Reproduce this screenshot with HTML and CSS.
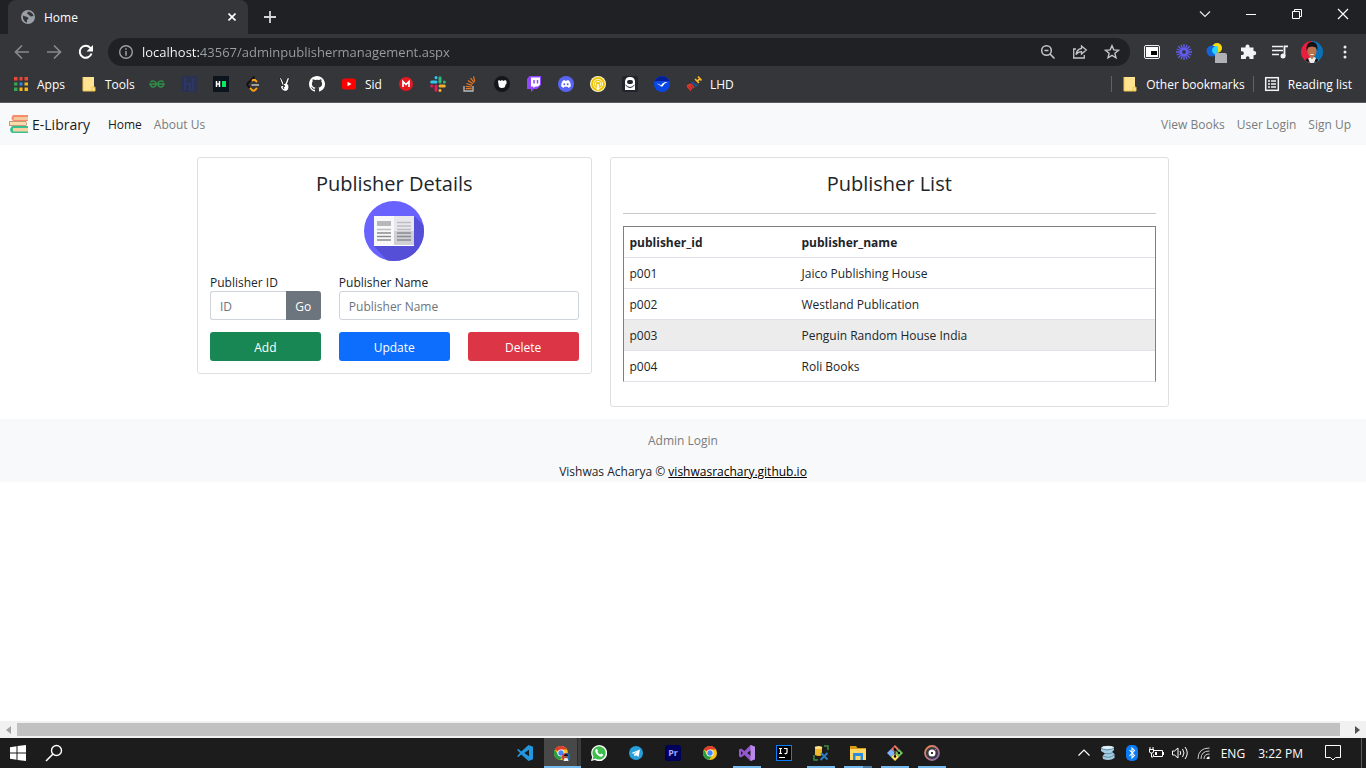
FILE: index.html
```html
<!DOCTYPE html>
<html lang="en">
<head>
<meta charset="utf-8">
<meta name="viewport" content="width=device-width, initial-scale=1">
<title>Home</title>
<link rel="stylesheet" href="styles.css">
</head>
<body>
<header class="browser">
  <div class="tab-strip">
    <div class="tab">
      <svg class="tab-icon" width="14" height="14" viewBox="0 0 14 14"><circle cx="7" cy="7" r="7" fill="#9aa0a6"/><path d="M2 5.500l2.500 1 2 .5 1 1.500-1.500 1.500v2.500C3.500 12 1.500 9.500 2 5.500zM7 1.500L6 3.500 8 5l1.500 1.500 3-.5C12 3.500 10 1.800 7 1.500z" fill="#35363a"/></svg>
      <span class="tab-title">Home</span>
      <button class="icon-btn tab-close" aria-label="Close tab"><svg width="8" height="8" viewBox="0 0 8 8"><path d="M.5.5l7 7M7.500.5l-7 7" stroke="#fff" stroke-width="1.600"/></svg></button>
    </div>
    <button class="icon-btn new-tab" aria-label="New tab"><svg width="12" height="12" viewBox="0 0 12 12"><path d="M6 0v12M0 6h12" stroke="#d5d6d8" stroke-width="1.800"/></svg></button>
    <div class="window-controls">
      <button class="icon-btn" aria-label="Search tabs"><svg width="12" height="12" viewBox="0 0 12 12"><path d="M1 3.500l5 5 5-5" fill="none" stroke="#e8e8e8" stroke-width="1.200"/></svg></button>
      <button class="icon-btn" aria-label="Minimize"><svg width="12" height="12" viewBox="0 0 12 12"><path d="M1 6.500h10" stroke="#fff"/></svg></button>
      <button class="icon-btn" aria-label="Restore"><svg width="12" height="12" viewBox="0 0 12 12"><path d="M1.500 3.500h7v7h-7zM3.500 3.500v-2h7v7h-2" fill="none" stroke="#fff"/></svg></button>
      <button class="icon-btn" aria-label="Close"><svg width="12" height="12" viewBox="0 0 12 12"><path d="M1 1l10 10M11 1L1 11" stroke="#fff" stroke-width="1.200"/></svg></button>
    </div>
  </div>
  <div class="toolbar">
    <button class="icon-btn" aria-label="Back"><svg width="16" height="16" viewBox="0 0 16 16"><path d="M15 8H2M8 1.500L1.500 8 8 14.500" fill="none" stroke="#87898c" stroke-width="1.700"/></svg></button>
    <button class="icon-btn" aria-label="Forward"><svg width="16" height="16" viewBox="0 0 16 16"><path d="M1 8h13M8 1.500L14.500 8 8 14.500" fill="none" stroke="#87898c" stroke-width="1.700"/></svg></button>
    <button class="icon-btn" aria-label="Reload"><svg width="16" height="16" viewBox="0 0 16 16"><path d="M13.500 9.500A6 6 0 1 1 12.300 3.800L13.500 5" fill="none" stroke="#fff" stroke-width="2"/><path d="M15 1v6.500H8.500z" fill="#fff"/></svg></button>
    <div class="omnibox">
      <svg width="14" height="14" viewBox="0 0 14 14"><circle cx="7" cy="7" r="6.300" fill="none" stroke="#9aa0a6" stroke-width="1.400"/><path d="M7 3.300v1.500M7 6v4.700" stroke="#9aa0a6" stroke-width="1.500"/></svg>
      <input class="url" type="text" aria-label="Address" value="localhost:43567/adminpublishermanagement.aspx">
      <button class="icon-btn" aria-label="Zoom"><svg width="16" height="16" viewBox="0 0 16 16"><circle cx="6.500" cy="6.500" r="4.800" fill="none" stroke="#c3c5c8" stroke-width="1.500"/><path d="M10 10l4.500 4.500M4.500 6.500h4" stroke="#c3c5c8" stroke-width="1.600"/></svg></button>
      <button class="icon-btn" aria-label="Share"><svg width="16" height="16" viewBox="0 0 16 16"><path d="M4 5H1.700v9h10.600v-3M9.500 2l4.800 4-4.800 4V7.700C7 7.700 5.500 8.500 4 10.500c.5-3.500 2.500-5.500 5.500-6z" fill="none" stroke="#c3c5c8" stroke-width="1.300"/></svg></button>
      <button class="icon-btn" aria-label="Bookmark this page"><svg width="16" height="16" viewBox="0 0 16 16"><path d="M8 1.700l1.800 4.200 4.700.4-3.600 3 1.100 4.500L8 11.400l-4 2.400 1.100-4.500-3.600-3 4.700-.4z" fill="none" stroke="#c3c5c8" stroke-width="1.400"/></svg></button>
    </div>
    <div class="extensions">
      <button class="icon-btn" aria-label="Picture in picture"><svg width="18" height="18" viewBox="0 0 18 18"><rect x="1.500" y="2.500" width="15" height="13" rx="1.500" fill="#35363a" stroke="#eee"/><rect x="3" y="4" width="12" height="10" fill="#fff"/><rect x="8" y="8" width="6" height="4" fill="#000"/></svg></button>
      <button class="icon-btn" aria-label="Loom"><svg width="18" height="18" viewBox="0 0 18 18"><path d="M9 1v16M1 9h16M3.300 3.300l11.400 11.400M14.700 3.300L3.300 14.700M6 1.700l6 14.600M12 1.700L6 16.300M1.700 6l14.600 6M1.700 12l14.600-6" stroke="#625df5" stroke-width="1.300"/><circle cx="9" cy="9" r="3.800" fill="#625df5"/><circle cx="9" cy="9" r="1.900" fill="#35363a"/></svg></button>
      <button class="icon-btn" aria-label="Extension"><svg width="22" height="22" viewBox="0 0 22 22"><circle cx="12" cy="7" r="5" fill="#fbdb0e"/><circle cx="7" cy="10" r="5.500" fill="#1565d8"/><path d="M7 9.500A5 5 0 0 1 12 5c1.500 2 1.500 5-1 8.500-2 0-4-2-4-4z" fill="#23d5ff"/><rect x="10" y="12" width="12" height="12" rx="2" fill="#aeb1b5"/></svg></button>
      <button class="icon-btn" aria-label="Extensions"><svg width="18" height="18" viewBox="0 0 18 18"><path d="M2 4.500h4.500V3.600a2 2 0 0 1 4 0v.9h4V8h.6a2 2 0 0 1 0 4.300h-.6V16H10.500v-1a1.800 1.800 0 0 0-3.600 0v1H2v-4h1a1.800 1.800 0 0 0 0-3.700H2z" fill="#f1f3f4"/></svg></button>
      <button class="icon-btn" aria-label="Media"><svg width="18" height="18" viewBox="0 0 18 18"><path d="M1 3.500h11M1 7.500h11M1 11.500h7" stroke="#f1f3f4" stroke-width="1.600"/><path d="M13.500 13V3.300H17" fill="none" stroke="#f1f3f4" stroke-width="1.800"/><circle cx="12" cy="13" r="2.500" fill="#f1f3f4"/></svg></button>
      <button class="icon-btn" aria-label="Profile"><svg width="22" height="22" viewBox="0 0 22 22"><defs><clipPath id="face"><circle cx="11" cy="11" r="11"/></clipPath></defs><g clip-path="url(#face)"><path d="M0 0h11v22H0z" fill="#e8203f"/><path d="M11 0h11v22H11z" fill="#0a70b8"/><path d="M4 22l2-4 4-2h3l4 2 1 4z" fill="#f0eee8"/><path d="M4 22l1-4 2-1 2 5zM18 22l-1-4-2-1-2 5z" fill="#1b1b20"/><ellipse cx="11" cy="10" rx="4.500" ry="6.500" fill="#b9744d"/><path d="M5.800 10C4.500 3 8 1 11 1s6.500 2 5.200 9L15 6.500l-4-1-4 1z" fill="#171113"/><path d="M9.500 13.500h3" stroke="#fff"/><path d="M8.800 15.500l2.200 3 2.200-3" fill="#b9744d"/></g></svg></button>
      <button class="icon-btn" aria-label="Menu"><svg width="16" height="16" viewBox="0 0 16 16"><g fill="#eee"><circle cx="8" cy="3" r="1.500"/><circle cx="8" cy="8" r="1.500"/><circle cx="8" cy="13" r="1.500"/></g></svg></button>
    </div>
  </div>
  <nav class="bookmarks" aria-label="Bookmarks">
    <a href="#" class="bookmark wide"><svg viewBox="0 0 16 16"><path d="M1 1h4v4H1zM6 1h4v4H6zM11 1h4v4h-4z" fill="#ee4539"/><path d="M1 6h4v4H1zM1 11h4v4H1z" fill="#33a852"/><path d="M6 6h4v4H6z" fill="#2a85f5"/><path d="M11 6h4v4h-4zM6 11h4v4H6zM11 11h4v4h-4z" fill="#f7b716"/><path d="M5.500 0v16M10.500 0v16M0 5.500h16M0 10.500h16" stroke="#35363a" stroke-width="2"/></svg><span>Apps</span></a>
    <a href="#" class="bookmark wide"><svg viewBox="0 0 16 16"><path d="M2 1h11v10l1 1v3H2z" fill="#ffe390"/><path d="M2 1v14h9M11 11h3v4h-3z" fill="none" stroke="#efc650"/></svg><span>Tools</span></a>
    <a href="#" class="bookmark" aria-label="GeeksforGeeks"><svg viewBox="0 0 16 16"><path d="M1.500 6C3 4.500 7 4.500 7 8s-4.500 4-5.500 1L1 8h14l-.5 1c-1 3-5.500 2.500-5.500-1s4-3.500 5.500-2" fill="none" stroke="#2f8d46" stroke-width="1.500"/></svg></a>
    <a href="#" class="bookmark" aria-label="Hashnode"><svg viewBox="0 0 16 16"><path d="M0 0h16v16H0z" fill="#2b3150"/><path d="M4 2v12M4 8h5v6M12 2v12H8" stroke="#2d3763" fill="none" stroke-width="2"/></svg></a>
    <a href="#" class="bookmark" aria-label="HackerRank"><svg viewBox="0 0 16 16"><path d="M0 0h16v16H0z" fill="#0e141e"/><path d="M3.500 5v6M6.500 5v6M3 8h4" stroke="#fff" stroke-width="1.500"/><path d="M9 5h4v6H9z" fill="#00ea64"/></svg></a>
    <a href="#" class="bookmark" aria-label="LeetCode"><svg viewBox="0 0 16 16"><path d="M9.500.5L3 7c-1 1-1 2 0 3l2 2" fill="none" stroke="#111" stroke-width="1.800"/><path d="M5 12l2 2c1 1 2 1 3 0l2-2M7 5l1-1h2l2 2" fill="none" stroke="#ffa116" stroke-width="1.800"/><path d="M6.500 9H14" stroke="#b3b3b3" stroke-width="1.700"/></svg></a>
    <a href="#" class="bookmark" aria-label="AngelList"><svg viewBox="0 0 16 16"><path d="M4 1.500l3 6 1 0 2.500-6 2 .5-2 6c2 1 2 5-.5 7-3 1-5.500-1-6.500-4l1.500-2.500L2.500 2z" fill="#fff" stroke="#111" stroke-width=".8"/><path d="M4 9l4 1-2 1 1 2M7 7l-1 2" fill="none" stroke="#222"/></svg></a>
    <a href="#" class="bookmark" aria-label="GitHub"><svg viewBox="0 0 16 16"><path d="M8 0C3.600 0 0 3.600 0 8c0 3.500 2.300 6.500 5.500 7.600.4.100.5-.2.500-.4v-1.500c-2.200.5-2.700-.9-2.700-.9-.4-.9-.9-1.200-.9-1.200-.7-.5.100-.5.100-.5.800.1 1.200.8 1.200.8.700 1.300 1.900.9 2.300.7.100-.5.300-.9.500-1.100-1.800-.2-3.600-.9-3.600-4 0-.9.300-1.600.8-2.100-.1-.2-.4-1 .1-2.100 0 0 .7-.2 2.200.8a7.600 7.600 0 0 1 4 0c1.500-1 2.200-.8 2.200-.8.500 1.100.2 1.900.1 2.100.5.500.8 1.200.8 2.100 0 3.100-1.900 3.800-3.700 4 .3.300.6.800.6 1.500v2.200c0 .2.100.5.500.4A8 8 0 0 0 8 0z" fill="#fff"/></svg></a>
    <a href="#" class="bookmark sid"><svg viewBox="0 0 16 16"><rect x="1" y="2.500" width="14" height="11" rx="2.500" fill="red"/><path d="M6.500 5.700L10.500 8l-4 2.300z" fill="#fff"/></svg><span>Sid</span></a>
    <a href="#" class="bookmark" aria-label="Mega"><svg viewBox="0 0 16 16"><circle cx="8" cy="8" r="7" fill="#e6191f"/><path d="M5 11V5.500l3 3 3-3V11" fill="none" stroke="#fff" stroke-width="1.700"/></svg></a>
    <a href="#" class="bookmark" aria-label="Slack"><svg viewBox="0 0 16 16"><g stroke-width="3" stroke-linecap="round"><path d="M6 1.600v.1M1.700 6H6" stroke="#36c5f0"/><path d="M10 1.700V6M14.300 6h.1" stroke="#2eb67d"/><path d="M10 14.300v.1M10 10h4.300" stroke="#ecb22e"/><path d="M6 10v4.300M1.700 10h.1" stroke="#e01e5a"/></g></svg></a>
    <a href="#" class="bookmark" aria-label="Stack Overflow"><svg viewBox="0 0 16 16"><path d="M2 10v5h9v-5" fill="none" stroke="#bcbbbb" stroke-width="1.300"/><path d="M3.700 12.700h6M3.800 10.300l6 .7M4.500 7.500l5.700 1.900M6 4.600l5 3.200M8.500 2l3.700 4.700M11.500.5l1.300 5" stroke="#e87922" stroke-width="1.200"/></svg></a>
    <a href="#" class="bookmark" aria-label="Peerlist"><svg viewBox="0 0 16 16"><circle cx="8" cy="8" r="8" fill="#141619"/><path d="M4 5l1-1 1.500 1 1.500-1 1.500 1L11 4l1.500 1v3l-1 .5c0 2.500-1 3.500-3.500 3.500s-3.300-1-3.500-3.500z" fill="#fff"/></svg></a>
    <a href="#" class="bookmark" aria-label="Twitch"><svg viewBox="0 0 16 16"><path d="M3.500 0H15v9l-4 4H8l-3 3v-3H1V3z" fill="#9146ff"/><path d="M5 1.500h9v7l-2 2H9.500L7.500 12v-1.500H5z" fill="#fff"/><path d="M8 4v3.500M11.500 4v3.500" stroke="#9146ff" stroke-width="1.500"/></svg></a>
    <a href="#" class="bookmark" aria-label="Discord"><svg viewBox="0 0 16 16"><circle cx="8" cy="8" r="8" fill="#5865f2"/><path d="M5 4.500l1.500-.5.500.8h2l.5-.8 1.500.5c1.500 2 2 4 1.700 6L10.500 12l-.8-1.200H6.300L5.500 12l-2.200-1.500C3 8.500 3.500 6.500 5 4.500z" fill="#fff"/><circle cx="6.300" cy="8.300" r="1" fill="#5865f2"/><circle cx="9.700" cy="8.300" r="1" fill="#5865f2"/></svg></a>
    <a href="#" class="bookmark" aria-label="Coin"><svg viewBox="0 0 16 16"><circle cx="8" cy="8" r="8" fill="#fff8d0"/><circle cx="8" cy="8" r="6" fill="none" stroke="#f0c400" stroke-width="2"/><circle cx="8" cy="8" r="4" fill="#f0c400"/><path d="M7.300 14V8M8.700 14V8M5.500 9.500a2.800 2.800 0 1 1 5 0" fill="none" stroke="#fff" stroke-width="1"/></svg></a>
    <a href="#" class="bookmark" aria-label="Hacker"><svg viewBox="0 0 16 16"><rect width="16" height="16" rx="2" fill="#20252d"/><path d="M3 14V6q0-5 5-5t5 5v8z" fill="#fff"/><rect x="5" y="4" width="6" height="4" rx="2" fill="#20252d"/><path d="M3.500 9q4.500 5 9 0" fill="none" stroke="#20252d"/></svg></a>
    <a href="#" class="bookmark" aria-label="Bird"><svg viewBox="0 0 16 16"><circle cx="8" cy="8" r="8" fill="#0a46e5"/><path d="M.7 5a8 8 0 0 1 14.600 0z" fill="#061e95"/><path d="M2.500 7.500q2.500 0 4.500 2 2-4 6.500-3.500-3.500 1-5 4.500H7Q5 8.500 2.500 7.500z" fill="#fff"/></svg></a>
    <a href="#" class="bookmark lhd"><svg viewBox="0 0 16 16"><g fill="none" stroke-width="1.600"><path d="M1 10l4 4.500M3 9l3 4M5 8l3 4M1 10l4-2" stroke="#e73427"/><path d="M6 6l4 4 2-2" stroke="#1d539f"/><path d="M9 3l4 4M12 .5l3.500 4M11 5l3-2" stroke="#f8b92a"/></g></svg><span>LHD</span></a>
    <span class="bookmark-end">
      <a href="#" class="bookmark other"><svg viewBox="0 0 16 16"><path d="M2 1h11v10l1 1v3H2z" fill="#ffe390"/><path d="M2 1v14h9M11 11h3v4h-3z" fill="none" stroke="#efc650"/></svg><span>Other bookmarks</span></a>
      <a href="#" class="bookmark reading"><svg viewBox="0 0 16 16"><rect x="1.700" y="1.700" width="12.600" height="12.600" fill="none" stroke="#f1f3f4" stroke-width="1.500"/><path d="M4 5h2M4 8h2M4 11h2M7 5h5M7 8h5M7 11h5" stroke="#f1f3f4" stroke-width="1.500"/></svg><span>Reading list</span></a>
    </span>
  </nav>
</header>

<div class="page">
  <nav class="navbar">
    <a href="#" class="brand"><svg width="20" height="20" viewBox="0 0 20 20"><path d="M4 1h15v6H4Q1 4 4 1z" fill="#f98a6d"/><path d="M5 3h14v3H4.500z" fill="#f4c99a"/><path d="M0 7h17q2 3 0 5H0z" fill="#c99b74"/><path d="M1 8h16v3H1z" fill="#f7dcae"/><path d="M3 12h16v7H3q-4-3 0-7z" fill="#39bf90"/><path d="M4 14h15v3.500H4z" fill="#f4d3a0"/></svg><span>E-Library</span></a>
    <a href="#" class="nav-link active">Home</a>
    <a href="#" class="nav-link">About Us</a>
    <div class="nav-end">
      <a href="#" class="nav-link">View Books</a>
      <a href="#" class="nav-link">User Login</a>
      <a href="#" class="nav-link">Sign Up</a>
    </div>
  </nav>

  <main class="content">
    <section class="card details">
      <h1 class="card-title">Publisher Details</h1>
      <svg class="publisher-icon" width="60" height="60" viewBox="0 0 60 60"><defs><clipPath id="disc"><circle cx="30" cy="30" r="30"/></clipPath></defs><g clip-path="url(#disc)"><path d="M0 0h60v60H0z" fill="#6962ff"/><path d="M50 15l15 14v36H28L10 45z" fill="#544fd6"/></g><path d="M10 15h20v30H10z" fill="#f8f8f8"/><path d="M30 15h20v15H30z" fill="#e7e7ec"/><path d="M30 30h20v15H30z" fill="#cfd0d6"/><path d="M10 44.500h40" stroke="#fff"/><path d="M13 20h14v5H13z" fill="#b8b8bc"/><path d="M13 28.500h14M33 21.500h14M33 25h14M33 28.500h14" stroke="#bcbcc1" stroke-width="1.300"/><path d="M13 32h14M13 35.500h14M13 39h14M33 32h14M33 35.500h14M33 39h14" stroke="#8c8c91" stroke-width="1.500"/></svg>
      <form class="form">
        <div class="field">
          <label for="pid">Publisher ID</label>
          <div class="input-group"><input id="pid" class="input" type="text" placeholder="ID"><button type="button" class="btn btn-go">Go</button></div>
        </div>
        <div class="field field-name">
          <label for="pname">Publisher Name</label>
          <input id="pname" class="input" type="text" placeholder="Publisher Name">
        </div>
        <button type="button" class="btn btn-add">Add</button>
        <button type="button" class="btn btn-update">Update</button>
        <button type="button" class="btn btn-delete">Delete</button>
      </form>
    </section>
    <section class="card list">
      <h2 class="card-title">Publisher List</h2>
      <hr class="rule">
      <table class="table">
        <thead><tr><th class="col-id">publisher_id</th><th>publisher_name</th></tr></thead>
        <tbody>
          <tr><td>p001</td><td>Jaico Publishing House</td></tr>
          <tr><td>p002</td><td>Westland Publication</td></tr>
          <tr class="hovered"><td>p003</td><td>Penguin Random House India</td></tr>
          <tr><td>p004</td><td>Roli Books</td></tr>
        </tbody>
      </table>
    </section>
  </main>

  <footer class="footer">
    <a href="#" class="admin-link">Admin Login</a>
    <p class="credit">Vishwas Acharya © <a href="#">vishwasrachary.github.io</a></p>
  </footer>
</div>

<div class="scrollbar">
  <button class="icon-btn scroll-btn" aria-label="Scroll left"><svg width="5" height="8" viewBox="0 0 5 8"><path d="M5 0v8L0 4z" fill="#a3a3a3"/></svg></button>
  <div class="thumb"></div>
  <button class="icon-btn scroll-btn end" aria-label="Scroll right"><svg width="5" height="8" viewBox="0 0 5 8"><path d="M0 0v8l5-4z" fill="#505050"/></svg></button>
</div>

<div class="taskbar">
  <div class="task-start">
    <button class="icon-btn" aria-label="Start"><svg width="16" height="16" viewBox="0 0 16 16"><path d="M0 2.300l6.500-1v6.200H0zM7.500 1.100L16 0v7.500H7.500zM0 8.500h6.500v6.200L0 13.700zM7.500 8.500H16V16l-8.500-1.100z" fill="#fff"/></svg></button>
    <button class="icon-btn" aria-label="Search"><svg width="18" height="18" viewBox="0 0 18 18"><circle cx="11.500" cy="6.500" r="5" fill="none" stroke="#fff" stroke-width="1.400"/><path d="M8 10l-7 7" stroke="#fff" stroke-width="1.600"/></svg></button>
  </div>
  <div class="task-apps">
    <button class="task" aria-label="Visual Studio Code"><svg viewBox="0 0 16 16"><path d="M11.500 0L16 1.800v12.400L11.500 16 4.300 9.500 1.500 12 0 11.200 3 8 0 4.800 1.500 4l2.800 2.500zM12 4.700L7.300 8l4.700 3.300z" fill="#2396e0" fill-rule="evenodd"/></svg></button>
    <button class="task active" aria-label="Chrome, work profile"><svg viewBox="0 0 16 16"><circle cx="7" cy="8" r="7" fill="#fbc116"/><path d="M7 8L.9 4.500A7 7 0 0 1 13 4.500H7z" fill="#e33b2e"/><path d="M.9 4.500A7 7 0 0 0 6 15l3.500-5L4 10z" fill="#299c48"/><circle cx="7" cy="8" r="3.500" fill="#fff"/><circle cx="7" cy="8" r="2.700" fill="#4285f4"/><circle cx="12" cy="12" r="4" fill="#e0333c"/><path d="M12 8a4 4 0 0 1 0 8z" fill="#1669b0"/><path d="M9.500 16l1-3h3l1 3z" fill="#eee"/><circle cx="12" cy="11.500" r="1.800" fill="#9d603c"/><path d="M10 11q0-2 2-2t2 2z" fill="#111"/></svg></button>
    <button class="task" aria-label="WhatsApp"><svg viewBox="0 0 16 16"><path d="M0 16l1.200-4A8 8 0 1 1 4 14.900z" fill="#fff"/><path d="M1.600 14.400l.8-3A6.600 6.600 0 1 1 4.600 13.600z" fill="#3ebe4d"/><path d="M5 4l1-.3 1 2-.6 1q1 2 2.800 2.700l1-1 2 1q0 2-2.200 2.300C7.500 11.500 4 8 4.200 5.500z" fill="#fff"/></svg></button>
    <button class="task" aria-label="Telegram"><svg viewBox="0 0 16 16"><circle cx="8" cy="8" r="7" fill="#279fda"/><path d="M3.500 8L12 4.500l-1.500 7.500L8 10.300l-1.500 1.200-.5-2.200L10 6 5.500 8.800z" fill="#fff"/></svg></button>
    <button class="task" aria-label="Premiere Pro"><svg viewBox="0 0 16 16"><rect width="16" height="16" rx="2.500" fill="#00005b"/><text x="8" y="11" text-anchor="middle" class="logo-text" fill="#aaa5ff">Pr</text></svg></button>
    <button class="task" aria-label="Chrome"><svg viewBox="0 0 16 16"><circle cx="8" cy="8" r="7" fill="#fbc116"/><path d="M8 8L1.900 4.500A7 7 0 0 1 14 4.500H8z" fill="#e33b2e"/><path d="M1.900 4.500A7 7 0 0 0 7 15l3.500-5L5 10z" fill="#299c48"/><circle cx="8" cy="8" r="3.500" fill="#fff"/><circle cx="8" cy="8" r="2.700" fill="#4285f4"/></svg></button>
    <button class="task open" aria-label="Visual Studio"><svg viewBox="0 0 16 16"><path d="M11.500 0L16 1.800v12.400L11.500 16 5.500 10 2 12.500l-2-1v-7l2-1L5.500 6zM12 5L8.200 8l3.800 3zM2 6v4l2-2z" fill="#9458cc" fill-rule="evenodd"/><path d="M11.500 0L16 1.800v12.400L11.500 16z" fill="#b889ea"/></svg></button>
    <button class="task" aria-label="IntelliJ IDEA"><svg viewBox="0 0 16 16"><rect x=".5" y=".5" width="15" height="15" fill="#000" stroke="#087cfa"/><path d="M3 3.500h3M4.500 3.500v5M3 8.500h3M8 3.500h3v4q0 1.200-2.500 1M3 12.500h6" stroke="#fff" fill="none" stroke-width="1.200"/></svg></button>
    <button class="task open" aria-label="SQL Server"><svg viewBox="0 0 16 16"><path d="M11 1h4v4M1 10v5h4" fill="none" stroke="#3f8a40" stroke-width="1.500"/><path d="M2 2v8q4 2 7 0V2z" fill="#f0b92c"/><ellipse cx="5.500" cy="2.500" rx="3.700" ry="1.500" fill="#ffe18a"/><path d="M7.500 15l7-7M8 8l6.500 6.500" stroke="#2a7fc5" stroke-width="1.800"/></svg></button>
    <button class="task open stacked" aria-label="File Explorer"><svg viewBox="0 0 16 16"><path d="M0 1h6l1.500 2H16v4H0z" fill="#dc9a12"/><path d="M0 4h16v11H0z" fill="#ffd866"/><path d="M3 15V8h10v7h-2.500v-4h-5v4z" fill="#2b8de0"/></svg></button>
    <button class="task open" aria-label="Git"><svg viewBox="0 0 16 16"><path d="M8 0l4 4-4 4-4-4z" fill="#ee7465"/><path d="M4 4l4 4-4 4-4-4z" fill="#80b3ff"/><path d="M12 4l4 4-4 4-4-4z" fill="#75c760"/><path d="M8 8l4 4-4 4-4-4z" fill="#ffe16b"/><path d="M6.500 2.500l5.500 5.500M8 4v8" stroke="#2b2b2b" stroke-width="1.200"/><circle cx="8" cy="11.500" r="1.200"/><circle cx="12" cy="8" r="1.200"/><circle cx="8" cy="4.500" r="1.200"/></svg></button>
    <button class="task open" aria-label="Groove Music"><svg viewBox="0 0 16 16"><defs><linearGradient id="ring" x2="1" y2="1"><stop stop-color="#f58b4a"/><stop offset="1" stop-color="#7e67bd"/></linearGradient></defs><circle cx="8" cy="8" r="7" fill="#3a3a40" stroke="url(#ring)" stroke-width="1.800"/><circle cx="8" cy="8" r="3.500" fill="#fff"/><circle cx="8" cy="8" r="1.100"/><path d="M10.500 5.500L13 3" stroke="#df6878"/></svg></button>
  </div>
  <div class="tray">
    <button class="icon-btn" aria-label="Show hidden icons"><svg width="14" height="14" viewBox="0 0 14 14"><path d="M1.500 9.500L7 4l5.500 5.500" fill="none" stroke="#fff" stroke-width="1.200"/></svg></button>
    <button class="icon-btn" aria-label="Database"><svg width="16" height="16" viewBox="0 0 16 16"><path d="M1 2.500Q7-.5 14 2v3l-2 2 2.500 2v4q-5 3.500-11.500 1l-.5-3L5 8.500 1 6z" fill="#a6cbdf"/><path d="M1 3.500q6 3 13 0M5 8.500q5 1 8-1M3 11q6 3 11-1" fill="none" stroke="#5b91ae"/><ellipse cx="7.500" cy="2.500" rx="5.500" ry="1.400" fill="#e1f0f6"/></svg></button>
    <button class="icon-btn" aria-label="Bluetooth"><svg width="12" height="16" viewBox="0 0 12 16"><rect width="12" height="16" rx="5" fill="#0a7cf5"/><path d="M3.500 5l5 5.500L6 13V3l2.500 2.500-5 5.500" fill="none" stroke="#fff" stroke-width="1.100"/></svg></button>
    <button class="icon-btn" aria-label="Battery"><svg width="16" height="14" viewBox="0 0 16 14"><path d="M6 4.500h8.500v6h-9v-2M15.500 6v3M1 3.500h5M2 1v2.500M5 1v2.500M1.500 4v2q0 1 2 1t2-1V4M3.500 7v4H5" fill="none" stroke="#fff"/><path d="M7 6h2v3H7z" fill="#fff"/></svg></button>
    <button class="icon-btn" aria-label="Volume"><svg width="16" height="14" viewBox="0 0 16 14"><path d="M.5 5h2l3.500-3v10L2.500 9h-2zM8 5q1.500 2 0 4M10.500 3q3 4 0 8M13 1q4.500 6 0 12" fill="none" stroke="#fff"/></svg></button>
    <button class="icon-btn" aria-label="Wi-Fi"><svg width="14" height="14" viewBox="0 0 14 14"><path d="M1 13Q1 2 12.500 2M4 13Q4 5 12.500 5M7 13q0-5 5.500-5" fill="none" stroke="#ccc"/><path d="M9.500 13q0-2.500 3-2.500V13z" fill="#fff"/></svg></button>
    <span class="lang">ENG</span>
    <time class="clock">3:22 PM</time>
    <button class="icon-btn" aria-label="Notifications"><svg width="16" height="18" viewBox="0 0 16 18"><path d="M.5 1.500h15v12h-5L8 16l-2.500-2.500h-5z" fill="none" stroke="#fff"/></svg></button>
  </div>
</div>
</body>
</html>
```
FILE: styles.css
```css
* { box-sizing: border-box; }

body {
  margin: 0;
  min-height: 100vh;
  display: flex;
  flex-direction: column;
  background: #fff;
  color: #212529;
  font-family: "Open Sans", "Noto Sans", sans-serif;
  font-size: 12px;
  line-height: 19px;
}

a { color: inherit; text-decoration: none; }
button, input { font: inherit; }
svg { display: block; flex: none; }

.icon-btn {
  display: flex;
  align-items: center;
  justify-content: center;
  padding: 0;
  border: 0;
  background: none;
}

/* Browser window */
.browser { background: #35363a; color: #fff; border-bottom: 1px solid #5a5b5e; }

.tab-strip { display: flex; height: 34px; padding-left: 8px; background: #202124; }
.tab {
  display: flex;
  align-items: center;
  gap: 9px;
  width: 240px;
  padding: 0 12px 0 13px;
  border-radius: 8px 8px 0 0;
  background: #35363a;
}
.tab-title { flex: 1; }
.new-tab { width: 44px; }
.window-controls { display: flex; height: 28px; margin-left: auto; }
.window-controls .icon-btn { width: 46px; }

.toolbar { display: flex; align-items: center; height: 36px; padding: 0 12px 0 14px; }
.toolbar > .icon-btn { width: 16px; margin-right: 16px; }
.omnibox {
  display: flex;
  align-items: center;
  flex: 1;
  height: 28px;
  padding: 0 10px 0 11px;
  margin-left: -2px;
  border-radius: 14px;
  background: #202124;
}
.omnibox .icon-btn { width: 16px; margin-left: 16px; }
.url {
  flex: 1;
  min-width: 0;
  margin-left: 9px;
  padding: 0;
  border: 0;
  outline: 0;
  background: linear-gradient(90deg, #fff 58px, #9aa0a6 58px) text;
  color: transparent;
  font-size: 13px;
}
.extensions { display: flex; align-items: center; margin-left: 6px; }
.extensions .icon-btn { width: 32px; }
.extensions .icon-btn:last-child { width: 34px; margin-right: -8px; }

.bookmarks { display: flex; align-items: center; height: 32px; padding: 0 0 4px 5px; }
.bookmark { display: flex; align-items: center; gap: 8px; padding: 0 8px; white-space: nowrap; }
.bookmark svg { width: 16px; height: 16px; }
.bookmark.wide { width: 68px; }
.bookmark.sid { width: 57px; }
.bookmark-end { display: flex; margin-left: auto; padding-right: 6px; }
.bookmark.other, .bookmark.reading { height: 16px; border-left: 1px solid #5f6368; padding-left: 10px; }

/* Page */
.page { flex: 1; }

.navbar {
  display: flex;
  align-items: center;
  gap: 12px;
  min-height: 42px;
  padding: 0 15px 0 9px;
  background: #f8f9fa;
}
.brand { display: flex; align-items: center; gap: 3px; margin-right: 6px; font-size: 14px; color: #1a1b1c; }
.nav-link { color: #7b7c7d; }
.nav-link.active { color: #1a1b1c; }
.nav-end { display: flex; gap: 12px; margin-left: auto; }

.content {
  display: grid;
  grid-template-columns: repeat(12, 1fr);
  align-items: start;
  gap: 18px;
  max-width: 972px;
  margin: 12px auto;
}
.card { padding: 12px; border: 1px solid #dfdfdf; border-radius: 3px; }
.details { grid-column: span 5; }
.list { grid-column: span 7; padding-bottom: 24px; }
.card-title { margin: 0; font-size: 20px; font-weight: 500; line-height: 27px; text-align: center; }
.publisher-icon { margin: 4px auto 11px; }

.form { display: grid; grid-template-columns: repeat(3, 1fr); gap: 12px 18px; }
.field label { display: block; padding-top: 2px; line-height: 17px; }
.field-name { grid-column: span 2; }
.input-group { display: flex; }
.input {
  width: 100%;
  min-width: 0;
  height: 29px;
  padding: 2px 9px 0;
  border: 1px solid #ced4da;
  border-radius: 3px;
  background: #fff;
  color: #212529;
}
.input::placeholder { color: #6c757d; }
.input-group .input { border-right: 0; border-radius: 3px 0 0 3px; }
.btn { height: 29px; padding: 2px 0 0; border: 0; border-radius: 3px; color: #fff; }
.btn-go { flex: none; width: 35px; border-radius: 0 3px 3px 0; background: #6c757d; }
.btn-add { background: #198754; }
.btn-update { background: #0d6efd; }
.btn-delete { background: #dc3545; }

.rule { margin: 16px 0 12px; border: 0; border-top: 1px solid #c7c8c9; }
.table { width: 100%; border: 1px solid #808080; border-bottom-color: #dee2e6; border-spacing: 0; }
.table th, .table td { height: 31px; padding: 0 6px; border-bottom: 1px solid #dee2e6; text-align: left; }
.table th { font-weight: 700; }
.table tr:last-child td { height: 30px; border-bottom: 0; }
.table .col-id { width: 172px; }
.table .hovered { background: #ececec; }

.footer { padding: 12px 0 1px; background: #f8f9fa; text-align: center; }
.admin-link { color: #7b7c7d; }
.credit { margin: 12px 0 0; }
.credit a { color: #000; text-decoration: underline; }

/* Horizontal scrollbar */
.scrollbar { display: flex; height: 17px; background: #f1f1f1; }
.scroll-btn { width: 17px; }
.scroll-btn.end { width: 26px; padding-left: 9px; }
.thumb { flex: 1; margin: 2px 0; background: #c1c1c1; }

/* Taskbar */
.taskbar {
  display: grid;
  grid-template-columns: 1fr auto 1fr;
  height: 30px;
  background: #1c1c1c;
  color: #fff;
}
.task-start { display: flex; gap: 19px; padding-left: 10px; }
.task-apps { display: flex; padding-left: 91px; }
.task { display: flex; align-items: center; justify-content: center; width: 37px; padding: 0; border: 0; background: none; }
.task svg { width: 16px; height: 16px; }
.task.open { background: linear-gradient(#76b9ed, #76b9ed) center bottom / 28px 2px no-repeat; }
.task.stacked { background-image: linear-gradient(90deg, #76b9ed 19px, #4b7ca5 19px); }
.task.active {
  background:
    linear-gradient(#76b9ed, #76b9ed) bottom / 100% 2px no-repeat,
    linear-gradient(90deg, #484848 33px, #2b2b2b 33px 34px, #3c3c3c 34px);
}
.logo-text { font: 700 9px "Open Sans", sans-serif; }
.tray { display: flex; align-items: center; justify-content: flex-end; margin-right: 4px; padding-right: 16px; border-right: 1px solid #5a5a5a; }
.tray .icon-btn { width: 24px; }
.lang { margin-left: 5px; }
.clock { margin: 0 18px 0 13px; }
```
